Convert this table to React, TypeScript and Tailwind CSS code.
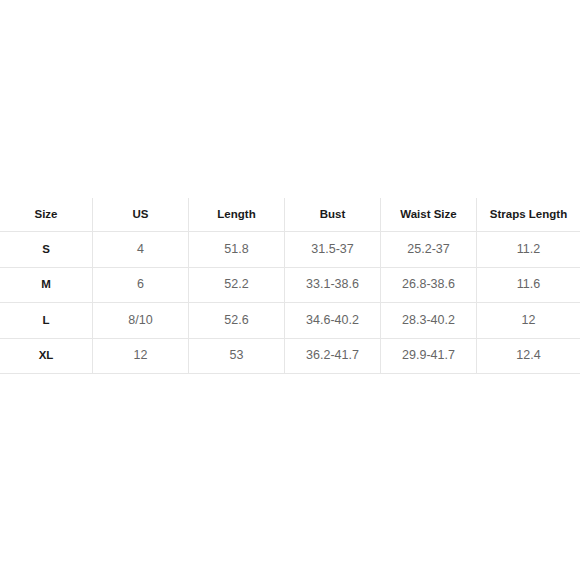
import React from "react";

const headers = ["Size", "US", "Length", "Bust", "Waist Size", "Straps Length"];

const rows = [
  ["S", "4", "51.8", "31.5-37", "25.2-37", "11.2"],
  ["M", "6", "52.2", "33.1-38.6", "26.8-38.6", "11.6"],
  ["L", "8/10", "52.6", "34.6-40.2", "28.3-40.2", "12"],
  ["XL", "12", "53", "36.2-41.7", "29.9-41.7", "12.4"],
];

const App = () => {
  return (
    <div
      className="w-[580px] h-[580px] bg-white pt-[198px]"
      style={{ fontFamily: '"Liberation Sans", Arial, sans-serif' }}
    >
      <div className="grid grid-cols-[93px_96px_96px_96px_96px_1fr]">
        {headers.map((h, i) => (
          <div
            key={h}
            className={`h-[34px] flex items-center justify-center border-b border-[#e6e6e6] text-[11.5px] font-bold text-[#1a1a1a] ${
              i < headers.length - 1 ? "border-r" : ""
            }`}
          >
            {h}
          </div>
        ))}
        {rows.map((row) =>
          row.map((cell, i) => (
            <div
              key={row[0] + i}
              className={`h-[35.5px] flex items-center justify-center border-b border-[#e6e6e6] ${
                i === 0 ? "text-[11.5px] font-bold text-[#1a1a1a]" : "text-[12.5px] text-[#666]"
              } ${i < row.length - 1 ? "border-r" : ""}`}
            >
              {cell}
            </div>
          ))
        )}
      </div>
    </div>
  );
};

export default App;
